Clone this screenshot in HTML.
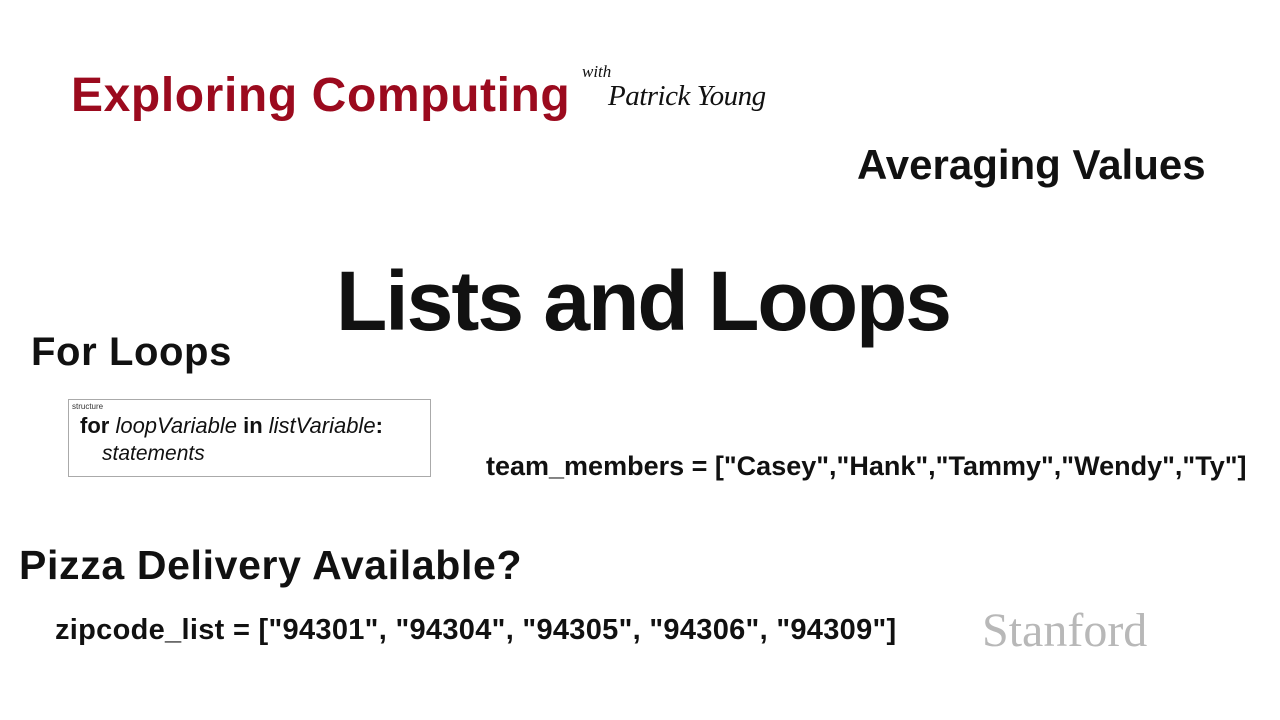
<!DOCTYPE html>
<html><head><meta charset="utf-8"><style>
body{margin:0;width:1280px;height:720px;background:#fff;position:relative;overflow:hidden;font-family:"Liberation Sans",sans-serif;color:#111}
div{position:absolute;white-space:nowrap}
.b{font-weight:bold}
</style></head><body>
<div class="b" style="left:71px;top:68px;font-size:48px;color:#9b0a1e;letter-spacing:0.6px">Exploring Computing</div>
<div style="left:582px;top:62px;font-size:17px;font-style:italic;font-family:'Liberation Serif',serif">with</div>
<div style="left:608px;top:80px;font-size:29px;font-style:italic;font-family:'Liberation Serif',serif;letter-spacing:-0.5px">Patrick Young</div>
<div class="b" style="left:857px;top:141px;font-size:42px;letter-spacing:0px">Averaging Values</div>
<div class="b" style="left:336px;top:253px;font-size:84px;letter-spacing:-2px">Lists and Loops</div>
<div class="b" style="left:31px;top:330px;font-size:40px;letter-spacing:0.6px">For Loops</div>
<div style="left:68px;top:399px;width:363px;height:78px;border:1px solid #aaa;box-sizing:border-box"></div>
<div style="left:72px;top:402px;font-size:8px;color:#333">structure</div>
<div style="left:80px;top:413px;font-size:22px"><b>for</b> <i>loopVariable</i> <b>in</b> <i>listVariable</i><b>:</b></div>
<div style="left:102px;top:442px;font-size:21px;font-style:italic">statements</div>
<div class="b" style="left:486px;top:451px;font-size:27px;letter-spacing:0px">team_members = ["Casey","Hank","Tammy","Wendy","Ty"]</div>
<div class="b" style="left:19px;top:542px;font-size:41px;letter-spacing:0.65px">Pizza Delivery Available?</div>
<div class="b" style="left:55px;top:614px;font-size:29px;letter-spacing:0.3px">zipcode_list = ["94301", "94304", "94305", "94306", "94309"]</div>
<div style="left:982px;top:603px;font-size:48px;font-family:'Liberation Serif',serif;color:#b8b8b8">Stanford</div>
</body></html>
